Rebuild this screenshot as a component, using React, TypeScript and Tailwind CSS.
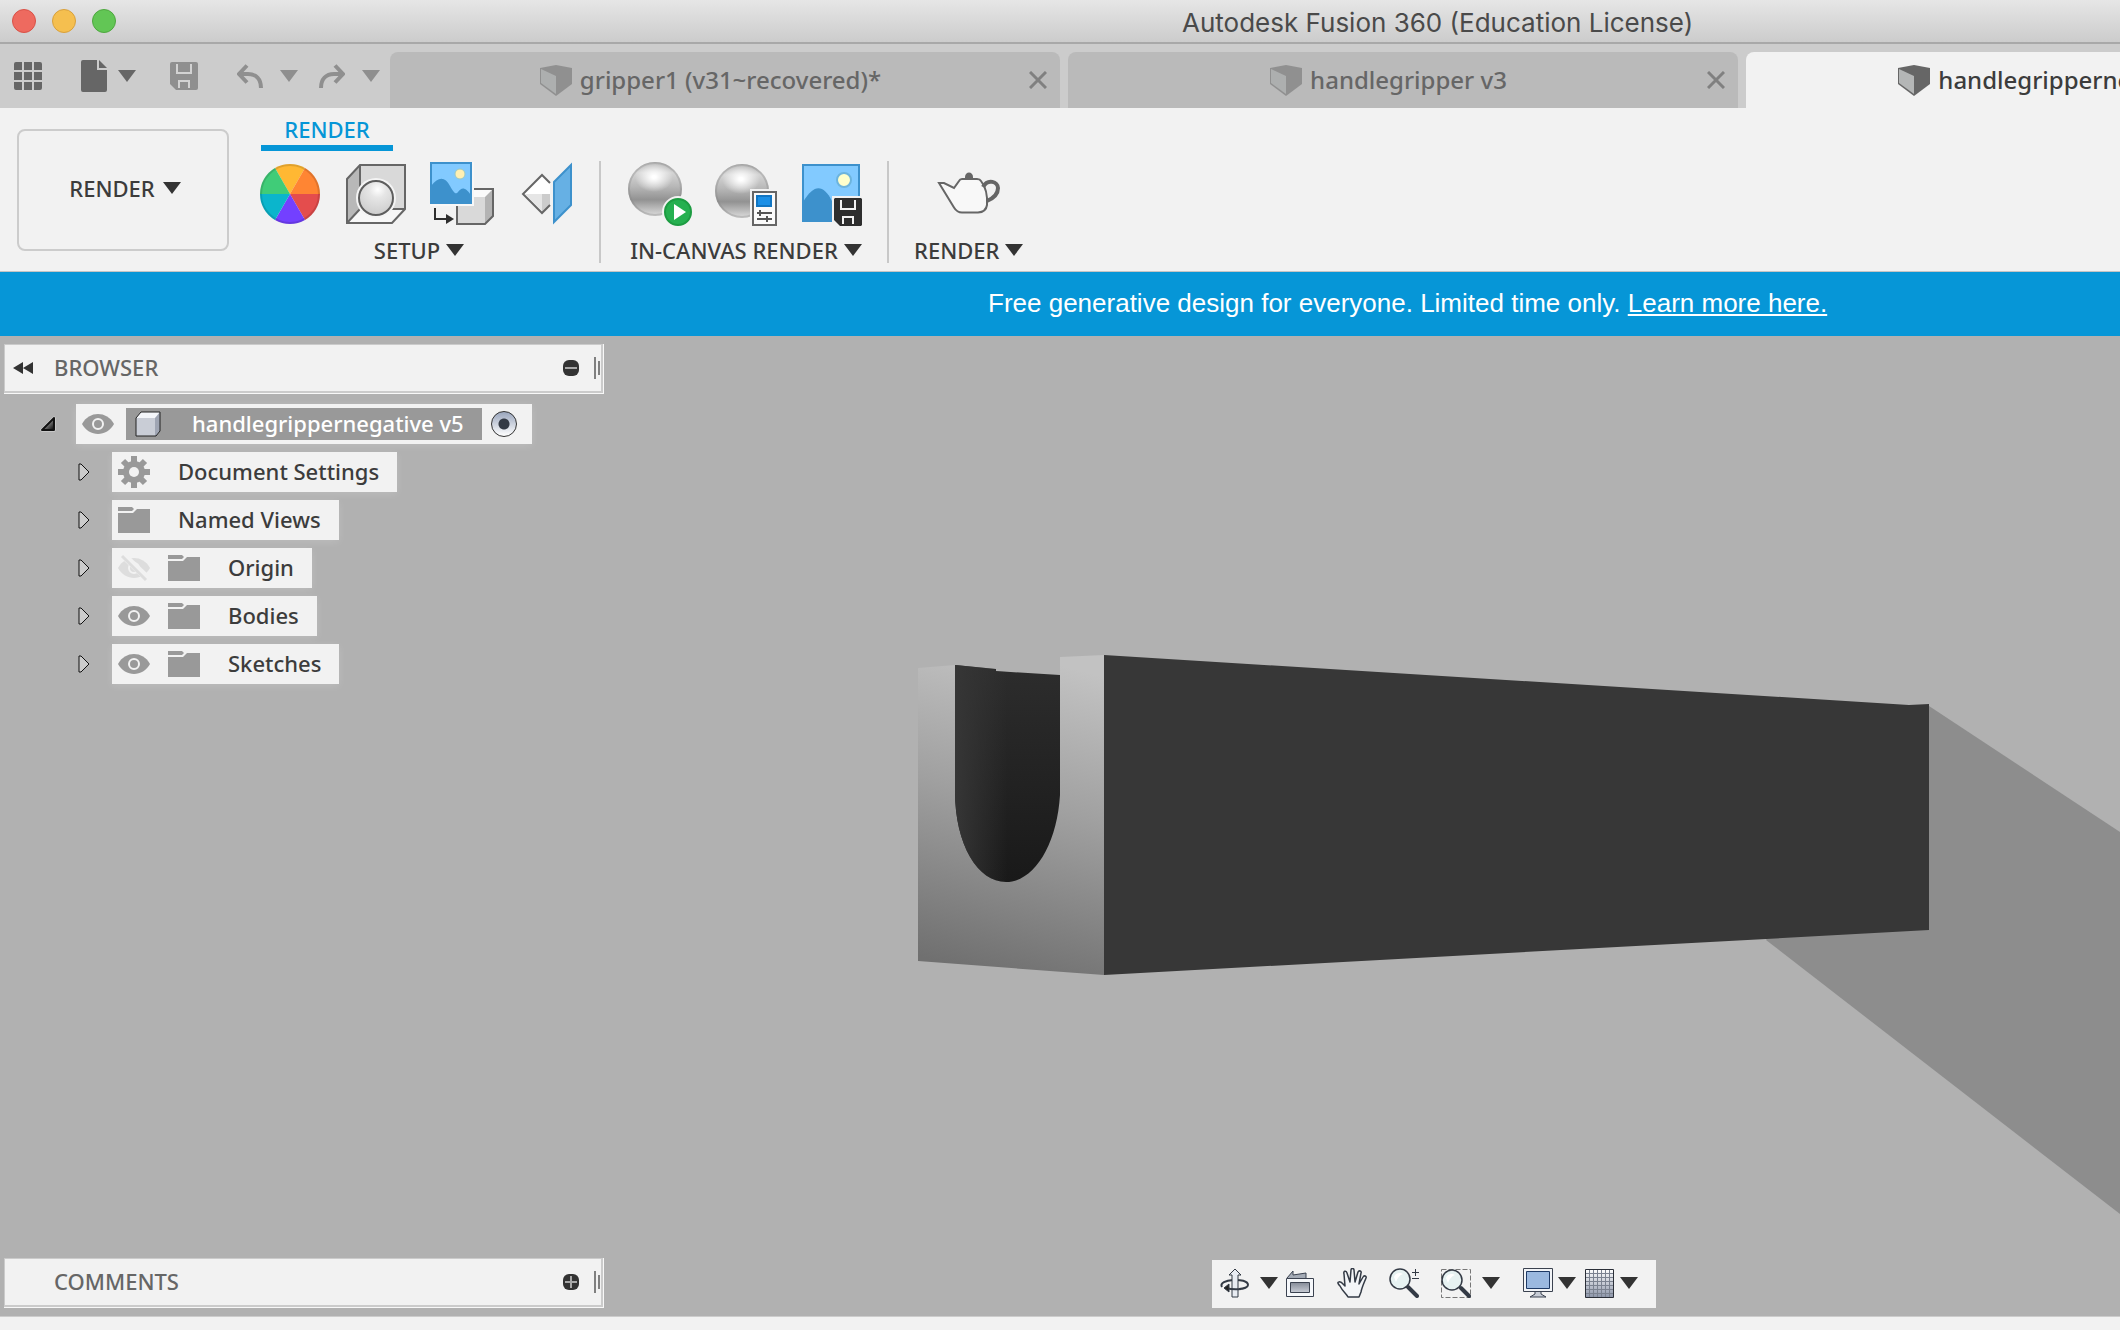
import type { ReactNode } from "react";

const Caret = ({ className = "fill-[#333333]" }: { className?: string }) => (
  <svg viewBox="0 0 18 12" className={`w-[18px] h-3 shrink-0 ${className}`}>
    <path d="M0 0h18L9 12z" />
  </svg>
);

/* ---------- quick access icons ---------- */

const GridIcon = () => (
  <svg viewBox="0 0 28 28" className="size-7" fill="#666666">
    <path d="M2 0h6v8H0V2a2 2 0 0 1 2-2zM10 0h8v8h-8zM20 0h6a2 2 0 0 1 2 2v6h-8zM0 10h8v8H0zM10 10h8v8h-8zM20 10h8v8h-8zM0 20h8v8H2a2 2 0 0 1-2-2zM10 20h8v8h-8zM20 20h8v6a2 2 0 0 1-2 2h-6z" />
  </svg>
);

const FileIcon = () => (
  <svg viewBox="0 0 26 32" className="w-[26px] h-8" fill="#666666">
    <path d="M2 0h14v10h10v20a2 2 0 0 1-2 2H2a2 2 0 0 1-2-2V2a2 2 0 0 1 2-2z" />
    <path d="M18 0l8 8h-8z" />
  </svg>
);

const SaveIcon = () => (
  <svg viewBox="0 0 28 28" className="size-7">
    <path d="M2 0h24a2 2 0 0 1 2 2v24a2 2 0 0 1-2 2H6l-6-6V2a2 2 0 0 1 2-2z" fill="#8f8f8f" />
    <path d="M7 2v9h14V2M9 26v-7h10v7" fill="none" stroke="#d2d2d2" strokeWidth="2" />
  </svg>
);

const UndoIcon = ({ flip = false }: { flip?: boolean }) => (
  <svg viewBox="0 0 26 24" className={flip ? "w-[26px] h-6 -scale-x-100" : "w-[26px] h-6"} fill="none" stroke="#8f8f8f">
    <path d="M10 1.500L2 10l8 8.500" strokeWidth="4" />
    <path d="M3 10h8c8 0 13 5 13 14" strokeWidth="4" />
  </svg>
);

const CubeIcon = ({ active }: { active?: boolean }) => (
  <svg viewBox="0 0 32 32" className="size-8 shrink-0">
    <path d="M0 4L16 1l16 3v16L16 32 0 20z" fill={active ? "#666666" : "#909090"} />
    <path d="M1 5l15 7v18L1 19z" fill={active ? "#b4b6b6" : "#adafaf"} />
  </svg>
);

const CloseIcon = () => (
  <svg viewBox="0 0 18 18" className="size-[18px]" stroke="#808080" strokeWidth="3">
    <path d="M1 1l16 16M17 1L1 17" />
  </svg>
);

/* ---------- ribbon icons ---------- */

const AppearanceIcon = () => (
  <svg viewBox="0 0 64 64" className="size-16">
    <path d="M32 32L17 6a30 30 0 0 1 30 0z" fill="#ffb833" />
    <path d="M32 32L47 6a30 30 0 0 1 15 26z" fill="#ff8533" />
    <path d="M32 32h30a30 30 0 0 1-15 26z" fill="#e44d4d" />
    <path d="M32 32l15 26a30 30 0 0 1-30 0z" fill="#7340ff" />
    <path d="M32 32L17 58A30 30 0 0 1 2 32z" fill="#0bb5cc" />
    <path d="M32 32H2A30 30 0 0 1 17 6z" fill="#40cc78" />
    <circle cx="32" cy="32" r="29" fill="none" stroke="#000000" strokeOpacity=".12" strokeWidth="2" />
  </svg>
);

const SceneIcon = () => (
  <svg viewBox="0 0 64 64" className="size-16">
    <defs>
      <radialGradient id="ball" cx=".55" cy=".25" r=".7">
        <stop offset="0" stopColor="#ffffff" />
        <stop offset=".35" stopColor="#e6e6e6" />
        <stop offset="1" stopColor="#cfcfcf" />
      </radialGradient>
    </defs>
    <path d="M16 3h45v44H16z" fill="#d9d9d9" />
    <path d="M3 17L16 3v44L3 61z" fill="#b8b8b8" />
    <path d="M16 47h45L48 61H3z" fill="#f7f7f7" />
    <path d="M3 17L16 3h45v44L48 61H3zM16 3v44h45M16 47L3 61" fill="none" stroke="#666666" strokeWidth="2" />
    <circle cx="32" cy="36" r="20" fill="#f4f4f4" />
    <circle cx="32" cy="36" r="17" fill="url(#ball)" stroke="#5e5e5e" strokeWidth="2" />
  </svg>
);

const DecalIcon = () => (
  <svg viewBox="0 0 64 64" className="size-16">
    <path d="M35 27h28v27l-8 8H27V35z" fill="#fafafa" />
    <path d="M27 35h28v27H27z" fill="#d9d9d9" />
    <path d="M55 35l8-8v27l-8 8z" fill="#b3b3b3" />
    <path d="M35 27h28v27l-8 8H27V35z" fill="none" stroke="#666666" strokeWidth="2" />
    <path d="M0 0h44v44H0z" fill="#f7f7f7" />
    <path d="M1 1h40v40H1z" fill="#82caff" stroke="#3d91cc" strokeWidth="2" />
    <path d="M1 24c8-10 14-9 19 0 4 7 6 9 8 6 4-5 7-5 13 3v8H1z" fill="#3d91cc" />
    <circle cx="30" cy="12" r="5" fill="#fff0b3" stroke="#9fc9c0" />
    <path d="M5 46v11h13" fill="none" stroke="#2e2e2e" strokeWidth="2" />
    <path d="M16 52l8 5-8 5z" fill="#2e2e2e" />
  </svg>
);

const TextureIcon = () => (
  <svg viewBox="0 0 64 64" className="size-16">
    <path d="M26 13l8 8v22l-8 8L7 32z" fill="#ffffff" />
    <path d="M9 32h17v17z" fill="#e6e6e6" />
    <path d="M26 32h8v11l-8 8z" fill="#cccccc" />
    <path d="M34 21l-8-8L7 32l19 19 8-8" fill="none" stroke="#666666" strokeWidth="2" />
    <path d="M38 20L55 3v40L38 60z" fill="#66b0e4" stroke="#3d91cc" strokeWidth="2" />
  </svg>
);

const Chrome = ({ id, cx, cy }: { id: string; cx: number; cy: number }) => (
  <>
    <defs>
      <linearGradient id={id} x1="0" y1="0" x2="0" y2="1">
        <stop offset="0" stopColor="#b0b0b0" />
        <stop offset=".2" stopColor="#d4d4d4" />
        <stop offset=".45" stopColor="#b8b8b8" />
        <stop offset=".7" stopColor="#929292" />
        <stop offset="1" stopColor="#dedede" />
      </linearGradient>
      <radialGradient id={`${id}-glow`}>
        <stop offset=".1" stopColor="#ffffff" />
        <stop offset="1" stopColor="#ffffff" stopOpacity="0" />
      </radialGradient>
    </defs>
    <circle cx={cx} cy={cy} r="27" fill={`url(#${id})`} />
    <circle cx={cx} cy={cy} r="26" fill="none" stroke="#888888" strokeOpacity=".35" strokeWidth="2" />
    <ellipse cx={cx - 1} cy={cy - 12} rx="19" ry="15" fill={`url(#${id}-glow)`} />
  </>
);

const StartRenderIcon = () => (
  <svg viewBox="0 0 64 64" className="size-16">
    <Chrome id="chrome-a" cx={27} cy={27} />
    <circle cx="50" cy="50" r="16" fill="#f2f2f2" />
    <circle cx="50" cy="50" r="13" fill="#26b050" stroke="#1d9c42" strokeWidth="2" />
    <path d="M46 42l12 8-12 8z" fill="#ffffff" />
  </svg>
);

const RenderSettingsIcon = () => (
  <svg viewBox="0 0 64 64" className="size-16">
    <Chrome id="chrome-b" cx={28} cy={29} />
    <path d="M36 27h28v37H36z" fill="#f2f2f2" />
    <path d="M39 30h23v33H39z" fill="#fafafa" stroke="#666666" strokeWidth="2" />
    <path d="M43 34h14v10H43z" fill="#1a8fe6" stroke="#1175c2" strokeWidth="2" />
    <path d="M43 51h15M43 57h15M46 48v6M53 54v6" stroke="#555555" strokeWidth="2" />
  </svg>
);

const CaptureIcon = () => (
  <svg viewBox="0 0 64 64" className="size-16">
    <path d="M3 3h56v56H3z" fill="#82caff" stroke="#3d91cc" strokeWidth="2" />
    <path d="M3 40c11-18 20-18 29-1v20H3z" fill="#3d91cc" />
    <circle cx="44" cy="18" r="7" fill="#ffffcc" stroke="#6db4dd" strokeWidth="2" />
    <path d="M32 34h32v30H32z" fill="#f2f2f2" />
    <path d="M35 36h26l1 1v26l-1 1H40l-6-6V37z" fill="#2e2e2e" />
    <path d="M41 38v9h14v-9M43 62v-7h10v7" fill="none" stroke="#f2f2f2" strokeWidth="2" />
  </svg>
);

const TeapotIcon = () => (
  <svg viewBox="0 0 64 64" className="size-16" stroke="#666666" strokeWidth="2">
    <path d="M2 21h5l10 5 5-7q1-2 3-2h15q3 0 4 2 7 9 6 24-1 7-9 7.500H25q-5 0-8-5z" fill="#f8f8f8" />
    <path d="M46 25c5-9 15-5 15 1 0 6-4 10-11 13" fill="none" strokeWidth="4" />
    <path d="M28 17v-2c0-6 8-6 8 0v2z" fill="#666666" stroke="none" />
  </svg>
);

/* ---------- browser tree icons ---------- */

const EyeIcon = () => (
  <svg viewBox="0 0 32 20" className="w-8 h-5" fill="#999999">
    <path d="M0 10C7-3.300 25-3.300 32 10 25 23.300 7 23.300 0 10z" />
    <circle cx="16" cy="10" r="5" fill="none" stroke="#f2f2f2" strokeWidth="2" />
  </svg>
);

const EyeOffIcon = () => (
  <svg viewBox="0 0 32 28" className="w-8 h-7">
    <path d="M0 14C7 .700 25 .700 32 14 25 27.300 7 27.300 0 14z" fill="#dddddd" />
    <circle cx="16" cy="14" r="5" fill="none" stroke="#f2f2f2" strokeWidth="2" />
    <path d="M5 1l26 25" stroke="#f2f2f2" strokeWidth="7" />
    <path d="M4 2l24 24" stroke="#dddddd" strokeWidth="3" />
  </svg>
);

const FolderIcon = () => (
  <svg viewBox="0 0 32 26" className="w-8 h-[26px]" fill="#999999">
    <path d="M0 0h14l2 2-2 2H0z" />
    <path d="M0 6h15l4-4h13v24H0z" />
  </svg>
);

const GearIcon = () => (
  <svg viewBox="0 0 32 32" className="size-8">
    <g stroke="#999999" strokeWidth="6">
      <path d="M16 0v32M0 16h32M5 5l22 22M27 5L5 27" />
    </g>
    <circle cx="16" cy="16" r="11" fill="#999999" />
    <circle cx="16" cy="16" r="5" fill="#f2f2f2" />
  </svg>
);

const ComponentIcon = () => (
  <svg viewBox="0 0 26 26" className="size-[26px]">
    <path d="M1 7l5-6h19v19l-4 5H1z" fill="#f4f6fa" />
    <path d="M1 7h19v18H1z" fill="#c9cdd6" />
    <path d="M20 7l5-6v19l-4 5h-1z" fill="#9fa5b3" />
    <path d="M1 7l5-6h19v19l-4 5H1z" fill="none" stroke="#222222" />
  </svg>
);

const Collapsed = () => (
  <svg viewBox="0 0 12 18" className="w-3 h-[18px]">
    <path d="M1 1h2l8 8-8 8H1z" fill="#cccccc" stroke="#111111" />
  </svg>
);

const Expanded = () => (
  <svg viewBox="0 0 16 16" className="size-4">
    <defs>
      <linearGradient id="arrow" x1="0" y1="0" x2="1" y2="1">
        <stop offset=".3" stopColor="#aaaaaa" />
        <stop offset="1" stopColor="#000000" />
      </linearGradient>
    </defs>
    <path d="M14 2v12H2z" fill="none" stroke="#dddddd" strokeWidth="3" strokeLinejoin="round" />
    <path d="M14 2v12H2z" fill="url(#arrow)" stroke="#111111" strokeWidth="2" strokeLinejoin="round" />
  </svg>
);

/* ---------- navigation bar icons ---------- */

const OrbitIcon = () => (
  <svg viewBox="0 0 30 30" className="size-[30px]" fill="none" stroke="#333a45">
    <path d="M2 19c-5-8 26-10 26-2 0 2-4 4-9 4" strokeWidth="2" />
    <path d="M15 1l6 6h-3v22h-6V7H9z" fill="#e8ecf2" />
    <path d="M6 20q7 2 15 1" strokeWidth="2" />
    <path d="M4 20l5-4v8z" fill="#222222" />
  </svg>
);

const LookAtIcon = () => (
  <svg viewBox="0 0 30 30" className="size-[30px]" stroke="#3b4250">
    <defs>
      <linearGradient id="screen" x1="0" y1="0" x2="0" y2="1">
        <stop offset="0" stopColor="#858b98" />
        <stop offset="1" stopColor="#c9cdd6" />
      </linearGradient>
    </defs>
    <path d="M2 10l6-7v4l13-2v5" fill="#a4abb6" />
    <path d="M1.500 10.500h27v18h-27z" fill="#f6f8fb" />
    <path d="M5.500 14.500h19v10h-19z" fill="url(#screen)" />
  </svg>
);

const PanIcon = () => (
  <svg viewBox="0 0 30 30" className="size-[30px]" fill="#f3f5f8" stroke="#333a45" strokeWidth="1.500" strokeLinejoin="round">
    <path d="M11 29c-2-4-5-5-8-11-2-2-3-4-1-4 2-1 4 2 6 4L7 6c-1-3 2-4 3-1l3 9 1-12c0-2 3-2 3 0l1 12 3-10c1-2 4-1 3 1l-2 11 4-7c1-2 4-1 3 1-2 5-4 9-5 14l-2 5z" />
  </svg>
);

const ZoomIcon = () => (
  <svg viewBox="0 0 30 30" className="size-[30px]" fill="none" stroke="#333a45">
    <path d="M19 19l9 9" strokeWidth="4" strokeLinecap="round" />
    <circle cx="11" cy="11" r="10" fill="#e6f2f2" strokeWidth="1.500" />
    <path d="M5 9c1-4 6-5 9-3-3 1-6 4-7 8z" fill="#ffffff" stroke="none" />
    <path d="M23 4.500h7M26.500 1v7M23 10.500h7" />
  </svg>
);

const FitIcon = () => (
  <svg viewBox="0 0 30 30" className="size-[30px]" fill="none" stroke="#333a45">
    <path d="M.500 1.500h29v28H.500z" stroke="#777777" strokeDasharray="5 2" />
    <path d="M20 20l8 8" strokeWidth="4" strokeLinecap="round" />
    <circle cx="11" cy="12" r="10" fill="#e6f2f2" strokeWidth="1.500" />
    <path d="M5 10c1-4 6-5 9-3-3 1-6 4-7 8z" fill="#ffffff" stroke="none" />
  </svg>
);

const DisplayIcon = () => (
  <svg viewBox="0 0 30 30" className="size-[30px]" stroke="#3b4250">
    <path d="M12 23h6v3l5 3H7l5-3z" fill="#c7ccd5" />
    <path d="M.500 .500h29v23H.500z" fill="#f2f4f7" />
    <path d="M3.500 3.500h23v17h-23z" fill="#9bb9e0" stroke="#1e3a66" />
  </svg>
);

const LayoutGridIcon = () => (
  <svg viewBox="0 0 30 30" className="size-[30px]">
    <defs>
      <linearGradient id="mesh" x1="0" y1="0" x2="0" y2="1">
        <stop offset="0" stopColor="#ffffff" />
        <stop offset="1" stopColor="#8b94a8" />
      </linearGradient>
    </defs>
    <path d="M1.500 1.500h28v28h-28z" fill="url(#mesh)" stroke="#2b2f38" />
    <path d="M5.500 2v27M9.500 2v27M13.500 2v27M17.500 2v27M21.500 2v27M25.500 2v27M2 5.500h27M2 9.500h27M2 13.500h27M2 17.500h27M2 21.500h27M2 25.500h27" stroke="#7b8290" />
  </svg>
);

/* ---------- viewport ---------- */

const Model = () => (
  <svg
    viewBox="0 0 2120 980"
    preserveAspectRatio="xMinYMin slice"
    className="absolute inset-0 w-full h-full"
    aria-label="3D model"
  >
    <defs>
      <linearGradient id="front" x1=".55" y1="0" x2=".4" y2="1">
        <stop offset="0" stopColor="#c2c2c2" />
        <stop offset=".45" stopColor="#a0a0a0" />
        <stop offset="1" stopColor="#707070" />
      </linearGradient>
      <linearGradient id="slot" x1="0" y1="0" x2="0" y2="1">
        <stop offset="0" stopColor="#2d2d2d" />
        <stop offset=".5" stopColor="#232323" />
        <stop offset="1" stopColor="#191919" />
      </linearGradient>
      <linearGradient id="edge" x1="0" y1="0" x2=".5" y2="0">
        <stop offset="0" stopColor="#363636" />
        <stop offset="1" stopColor="#363636" stopOpacity="0" />
      </linearGradient>
    </defs>
    <path d="M1929 370l191 126v382L1766 604z" fill="#8d8d8d" />
    <path d="M918 332l37-3v10h105v-18l44-2v320l-186-14z" fill="url(#front)" />
    <path d="M955 329l41 4v2l64 4v120c-3 50-26 87-54 87s-51-37-51-91z" fill="url(#slot)" />
    <path d="M955 329l41 4v2l64 4v120c-3 50-26 87-54 87s-51-37-51-91z" fill="url(#edge)" />
    <path d="M1104 319l805 50 20-1v226l-825 45z" fill="#373737" />
  </svg>
);

const TABS = [
  { name: "gripper1 (v31~recovered)*", active: false },
  { name: "handlegripper v3", active: false },
  { name: "handlegrippernegative v5", active: true },
];

const TREE = [
  { name: "Document Settings", icon: "gear" },
  { name: "Named Views", icon: "folder" },
  { name: "Origin", icon: "folder", eye: "off" },
  { name: "Bodies", icon: "folder", eye: "on" },
  { name: "Sketches", icon: "folder", eye: "on" },
];

const RibbonGroup = ({ label, children }: { label: string; children: ReactNode }) => (
  <div className="flex flex-col items-center gap-3">
    <div className="flex gap-[22px] pt-px">{children}</div>
    <button className="flex items-center gap-[6px] leading-6">
      {label}
      <Caret />
    </button>
  </div>
);

const Tool = ({ label, children }: { label: string; children: ReactNode }) => (
  <button aria-label={label} className="shrink-0">
    {children}
  </button>
);

const Divider = ({ className }: { className: string }) => (
  <div className={`w-[2px] h-[102px] bg-[#c8c8c8] ${className}`} />
);

const Panel = ({ title, open }: { title: string; open?: boolean }) => (
  <div className="w-[600px] border-r border-b border-[#f8f8f8]">
    <div className="flex items-center h-[49px] bg-[#f2f2f2] border-l border-t border-r-2 border-b-2 border-[#cbcbcb] text-[#666666]">
      <div className="w-[49px] pl-2">
        {open && (
          <button aria-label="Collapse browser" className="block">
            <svg viewBox="0 0 20 12" className="w-5 h-3" fill="#333333">
              <path d="M10 0v12L0 6zM20 0v12L10 6z" />
            </svg>
          </button>
        )}
      </div>
      <h2 className="flex-1 pb-[2px]">{title}</h2>
      <button aria-label={open ? "Hide" : "Show"} className="mr-[15px]">
        <svg viewBox="0 0 16 16" className="size-4">
          <rect width="16" height="16" rx="6" fill="#333333" />
          <path d={open ? "M2 8h12" : "M2 8h12M8 2v12"} stroke="#a8a8a8" strokeWidth="2" />
        </svg>
      </button>
      <div className="flex items-center gap-[2px] pr-px">
        <div className="w-[2px] h-[22px] bg-[#808080]" />
        <div className="w-[2px] h-[14px] bg-[#808080]" />
      </div>
    </div>
  </div>
);

export default function App() {
  return (
    <div className="min-h-screen flex flex-col overflow-hidden bg-[#f2f2f2] font-['Noto_Sans',sans-serif] font-medium text-[22px] text-[#3c3c3c]">
      <header className="h-11 flex items-center px-3 bg-linear-to-b from-[#e6e6e6] to-[#cccccc] border-b-2 border-[#a8a8a8]">
        <div className="flex gap-4">
          <button aria-label="Close window" className="size-6 rounded-full bg-[#ee6a5f] border border-[#d95147]" />
          <button aria-label="Minimize window" className="size-6 rounded-full bg-[#f5bf4f] border border-[#d8a03c]" />
          <button aria-label="Zoom window" className="size-6 rounded-full bg-[#62c655] border border-[#4ea73f]" />
        </div>
        <h1 className="ml-[1066px] pt-1 whitespace-nowrap font-['Inter',sans-serif] font-normal text-[26px] leading-8 text-[#4a4a4a]">
          Autodesk Fusion 360 (Education License)
        </h1>
      </header>

      <div className="flex h-16 bg-[#cccccc]">
        <div className="w-[390px] shrink-0 flex items-center pl-[14px] pb-4 pt-4">
          <button aria-label="Data panel" className="mr-[39px]"><GridIcon /></button>
          <button aria-label="File" className="flex items-center gap-[11px] mr-[34px]">
            <FileIcon />
            <Caret className="fill-[#666666]" />
          </button>
          <button aria-label="Save" className="mr-[39px]"><SaveIcon /></button>
          <button aria-label="Undo" className="flex items-center gap-[17px] mr-[21px]">
            <UndoIcon />
            <Caret className="fill-[#8f8f8f]" />
          </button>
          <button aria-label="Redo" className="flex items-center gap-[17px]">
            <UndoIcon flip />
            <Caret className="fill-[#8f8f8f]" />
          </button>
        </div>
        <nav className="flex gap-2 pt-2">
          {TABS.map(({ name, active }) => (
            <div
              key={name}
              className={`w-[670px] shrink-0 flex items-center pr-[13px] rounded-t-lg text-[24px] ${active ? "bg-[#f2f2f2] text-[#3c3c3c]" : "bg-[#bababa] text-[#666666]"}`}
            >
              <button className="flex-1 flex items-center justify-center gap-2 pl-[2px]">
                <CubeIcon active={active} />
                {name}
              </button>
              <button aria-label={`Close ${name}`}><CloseIcon /></button>
            </div>
          ))}
        </nav>
      </div>

      <div className="flex h-[164px] pl-[17px] border-b border-[#c4c4c4]">
        <button className="mt-[21px] mr-[29px] w-[212px] h-[122px] shrink-0 flex items-center justify-center gap-2 pl-1 pb-1 border-2 border-[#cccccc] rounded-lg">
          RENDER
          <Caret />
        </button>
        <div className="pt-[7px]">
          <button className="ml-[3px] w-[132px] h-9 flex items-center justify-center pb-[2px] border-b-6 border-[#0696d7] text-[#0696d7] leading-6">
            RENDER
          </button>
          <div className="flex mt-[10px]">
            <RibbonGroup label="SETUP">
              <Tool label="Appearance"><AppearanceIcon /></Tool>
              <Tool label="Scene settings"><SceneIcon /></Tool>
              <Tool label="Decal"><DecalIcon /></Tool>
              <Tool label="Texture map controls"><TextureIcon /></Tool>
            </RibbonGroup>
            <Divider className="ml-[19px] mr-[27px]" />
            <RibbonGroup label="IN-CANVAS RENDER">
              <Tool label="In-canvas render"><StartRenderIcon /></Tool>
              <Tool label="In-canvas render settings"><RenderSettingsIcon /></Tool>
              <Tool label="Capture image"><CaptureIcon /></Tool>
            </RibbonGroup>
            <Divider className="ml-[23px] mr-[25px]" />
            <RibbonGroup label="RENDER">
              <Tool label="Render"><TeapotIcon /></Tool>
            </RibbonGroup>
          </div>
        </div>
      </div>

      <div className="h-16 flex items-center pl-[988px] pb-[2px] whitespace-nowrap bg-[#0696d7] text-white font-['Liberation_Sans',sans-serif] font-normal text-[26px]">
        <p>
          Free generative design for everyone. Limited time only.{" "}
          <a href="#" className="underline underline-offset-2">Learn more here.</a>
        </p>
      </div>

      <main className="relative flex-1 flex flex-col justify-between bg-[#b1b1b1] border-b border-[#cccccc] pt-2 pb-2 pl-1">
        <Model />

        <section className="relative">
          <Panel title="BROWSER" open />
          <ul className="mt-[10px] flex flex-col gap-2">
            <li className="flex items-center pl-9">
              <button aria-label="Collapse" className="w-9"><Expanded /></button>
              <div className="h-10 flex items-center pl-[6px] pr-[15px] bg-[#f2f2f2] shadow-[0_2px_8px_rgba(255,255,255,0.15)]">
                <button aria-label="Toggle visibility" className="mr-3"><EyeIcon /></button>
                <div className="h-8 w-[356px] flex items-center pl-[9px] gap-[31px] bg-[#999999] text-white">
                  <ComponentIcon />
                  <label htmlFor="activate" className="pb-[2px]">handlegrippernegative v5</label>
                </div>
                <input
                  id="activate"
                  type="radio"
                  defaultChecked
                  className="appearance-none ml-[9px] size-[26px] rounded-full border border-[#333333] bg-[radial-gradient(circle,#333a45_0_5px,transparent_6px),linear-gradient(#9aa6bd,#ffffff)]"
                />
              </div>
            </li>
            {TREE.map(({ name, icon, eye }) => (
              <li key={name} className="flex items-center pl-[74px]">
                <button aria-label={`Expand ${name}`} className="w-[34px]"><Collapsed /></button>
                <div className="h-10 flex items-center pl-[6px] pr-[18px] bg-[#f2f2f2] shadow-[0_2px_8px_rgba(255,255,255,0.15)]">
                  {eye && (
                    <button aria-label={`Toggle ${name}`} className="mr-[18px]">
                      {eye === "on" ? <EyeIcon /> : <EyeOffIcon />}
                    </button>
                  )}
                  {icon === "gear" ? <GearIcon /> : <FolderIcon />}
                  <span className="ml-7 pb-[2px]">{name}</span>
                </div>
              </li>
            ))}
          </ul>
        </section>

        <section className="relative flex items-end">
          <Panel title="COMMENTS" />
          <div className="ml-[608px] h-12 w-[444px] shrink-0 flex items-center px-2 pb-[2px] bg-[#f2f2f2]">
            <button aria-label="Orbit" className="flex items-center gap-[10px] mr-[7px]"><OrbitIcon /><Caret /></button>
            <button aria-label="Look at" className="mr-[22px]"><LookAtIcon /></button>
            <button aria-label="Pan" className="mr-[22px]"><PanIcon /></button>
            <button aria-label="Zoom" className="mr-[22px]"><ZoomIcon /></button>
            <button aria-label="Fit" className="flex items-center gap-[11px] mr-[23px]"><FitIcon /><Caret /></button>
            <button aria-label="Display settings" className="flex items-center gap-[5px] mr-2"><DisplayIcon /><Caret /></button>
            <button aria-label="Grid and snaps" className="flex items-center gap-[6px]"><LayoutGridIcon /><Caret /></button>
          </div>
        </section>
      </main>

      <footer className="h-[13px] bg-[#f2f2f2]" />
    </div>
  );
}
